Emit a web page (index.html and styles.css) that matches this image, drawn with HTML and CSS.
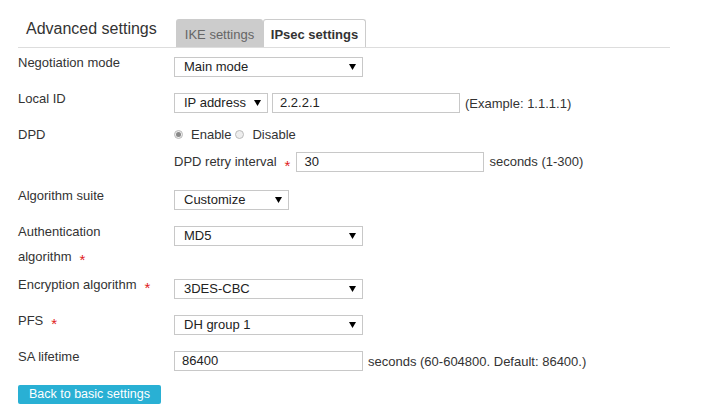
FILE: index.html
```html
<!DOCTYPE html>
<html>
<head>
<meta charset="utf-8">
<link rel="stylesheet" href="styles.css">
</head>
<body>
<div class="page">
  <div class="header">
    <div class="title">Advanced settings</div>
    <div class="tab tab-off">IKE settings</div>
    <div class="tab tab-on">IPsec settings</div>
  </div>

  <div class="row first">
    <div class="label">Negotiation mode</div>
    <div class="ctrl">
      <div class="select w-wide"><span>Main mode</span><svg class="arrow" width="7" height="6" viewBox="0 0 7 6"><path d="M0 0H7L3.5 6Z" fill="#000"/></svg></div>
    </div>
  </div>

  <div class="row">
    <div class="label">Local ID</div>
    <div class="ctrl">
      <div class="select w-id"><span>IP address</span><svg class="arrow" width="7" height="6" viewBox="0 0 7 6"><path d="M0 0H7L3.5 6Z" fill="#000"/></svg></div>
      <div class="input w-in gap4">2.2.2.1</div>
      <span class="hint">(Example: 1.1.1.1)</span>
    </div>
  </div>

  <div class="row row-dpd">
    <div class="label">DPD</div>
    <div class="col">
      <div class="radios">
        <span class="radio checked"></span><span class="rtext">Enable</span>
        <span class="radio"></span><span class="rtext">Disable</span>
      </div>
      <div class="subline">
        <span>DPD retry interval</span><span class="star">*</span>
        <div class="input w-in gap6">30</div>
        <span class="hint">seconds (1-300)</span>
      </div>
    </div>
  </div>

  <div class="row">
    <div class="label">Algorithm suite</div>
    <div class="ctrl">
      <div class="select w-suite"><span>Customize</span><svg class="arrow" width="7" height="6" viewBox="0 0 7 6"><path d="M0 0H7L3.5 6Z" fill="#000"/></svg></div>
    </div>
  </div>

  <div class="row row-tall">
    <div class="label">Authentication<br>algorithm<span class="star">*</span></div>
    <div class="ctrl">
      <div class="select w-wide"><span>MD5</span><svg class="arrow" width="7" height="6" viewBox="0 0 7 6"><path d="M0 0H7L3.5 6Z" fill="#000"/></svg></div>
    </div>
  </div>

  <div class="row">
    <div class="label">Encryption algorithm<span class="star">*</span></div>
    <div class="ctrl">
      <div class="select w-wide"><span>3DES-CBC</span><svg class="arrow" width="7" height="6" viewBox="0 0 7 6"><path d="M0 0H7L3.5 6Z" fill="#000"/></svg></div>
    </div>
  </div>

  <div class="row">
    <div class="label">PFS<span class="star">*</span></div>
    <div class="ctrl">
      <div class="select w-wide"><span>DH group 1</span><svg class="arrow" width="7" height="6" viewBox="0 0 7 6"><path d="M0 0H7L3.5 6Z" fill="#000"/></svg></div>
    </div>
  </div>

  <div class="row">
    <div class="label">SA lifetime</div>
    <div class="ctrl">
      <div class="input w-wide">86400</div>
      <span class="hint">seconds (60-604800. Default: 86400.)</span>
    </div>
  </div>

  <div class="btn">Back to basic settings</div>
</div>
</body>
</html>
```

FILE: styles.css
```css
html, body {
  margin: 0;
  padding: 0;
  background: #fff;
}
body {
  font-family: "Liberation Sans", Arial, sans-serif;
  font-size: 13px;
  color: #333;
}
.page {
  padding: 19px 0 0 18px;
}
.header {
  display: flex;
  align-items: flex-end;
  width: 652px;
  border-bottom: 1px solid #ddd;
  height: 28px;
}
.title {
  font-size: 16px;
  color: #333;
  padding-left: 8px;
  width: 150px;
  line-height: 28px;
  align-self: stretch;
  margin-top: -4px;
}
.tab {
  height: 28px;
  line-height: 31px;
  box-sizing: border-box;
  border-radius: 3px 3px 0 0;
  text-align: center;
}
.tab-off {
  width: 87px;
  background: #ccc;
  color: #666;
}
.tab-on {
  width: 103px;
  background: #fff;
  border: 1px solid #ccc;
  border-bottom: none;
  font-weight: bold;
  color: #333;
  line-height: 29px;
}
.row {
  display: flex;
  align-items: flex-start;
  padding-bottom: 9px;
}
.row.first {
  padding-top: 2px;
}
.row-tall {
  padding-bottom: 3px;
}
.row-dpd {
  padding-bottom: 9px;
}
.label {
  width: 156px;
  flex: none;
  line-height: 25px;
}
.ctrl {
  display: flex;
  align-items: center;
  margin-top: 7px;
}
.col {
  display: flex;
  flex-direction: column;
  gap: 2px;
}
.select, .input {
  height: 20px;
  box-sizing: border-box;
  border: 1px solid #c8c8c8;
  background: #fff;
  color: #222;
  display: flex;
  align-items: center;
  line-height: 18px;
}
.select {
  justify-content: space-between;
  padding: 0 6px 0 9px;
}
.input {
  padding-left: 7px;
}
.arrow {
  flex: none;
}
.w-wide { width: 189px; }
.w-id { width: 94px; }
.w-in { width: 188px; }
.w-suite { width: 115px; }
.gap4 { margin-left: 4px; }
.gap6 { margin-left: 6px; }
.hint {
  margin-left: 5px;
  color: #333;
}
.radios {
  display: flex;
  align-items: center;
  height: 25px;
}
.radio {
  width: 9px;
  height: 9px;
  border: 1px solid #bbb;
  border-radius: 50%;
  background: #eee;
  box-sizing: border-box;
  display: flex;
  align-items: center;
  justify-content: center;
}
.radio.checked::after {
  content: "";
  width: 5px;
  height: 5px;
  border-radius: 50%;
  background: #888;
}
.rtext {
  margin-left: 8px;
  margin-right: 4px;
}
.subline {
  display: flex;
  align-items: center;
  height: 25px;
}
.star {
  color: #e02020;
  margin-left: 8px;
  vertical-align: -4px;
  display: inline-block;
  line-height: 1;
  font-size: 15px;
}
.subline .star {
  margin-top: 7px;
}
.btn {
  display: inline-block;
  margin-top: 5px;
  background: #29b0d4;
  color: #fff;
  height: 19px;
  line-height: 19px;
  padding: 0 11px;
  border-radius: 2px;
  white-space: nowrap;
  font-size: 12.5px;
}
```
